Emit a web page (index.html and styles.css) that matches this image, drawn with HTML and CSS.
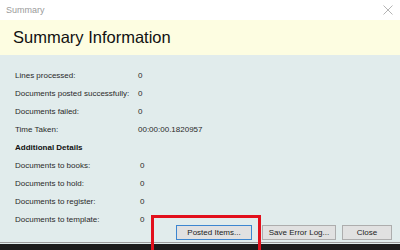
FILE: index.html
```html
<!DOCTYPE html>
<html>
<head>
    <title>Summary</title>
    <link rel="stylesheet" href="styles.css">
</head>
<body>
    <div class="dialog">
        <div class="titlebar">
            <span class="caption">Summary</span>
            <svg class="close-x" width="10" height="10" viewBox="0 0 10 10">
                <path d="M0.5 0.5 L9.5 9.5 M9.5 0.5 L0.5 9.5" stroke="#b4b4b4" stroke-width="1" fill="none"/>
            </svg>
        </div>

        <div class="header">Summary Information</div>

        <div class="content">
            <div class="rows">
                <div class="label">Lines processed:</div>
                <div class="value">0</div>
                <div class="label">Documents posted successfully:</div>
                <div class="value">0</div>
                <div class="label">Documents failed:</div>
                <div class="value">0</div>
                <div class="label">Time Taken:</div>
                <div class="value">00:00:00.1820957</div>
                <div class="section">Additional Details</div>
                <div class="label">Documents to books:</div>
                <div class="value detail">0</div>
                <div class="label">Documents to hold:</div>
                <div class="value detail">0</div>
                <div class="label">Documents to register:</div>
                <div class="value detail">0</div>
                <div class="label">Documents to template:</div>
                <div class="value detail">0</div>
            </div>

            <div class="buttons">
                <button class="btn default posted">Posted Items...</button>
                <button class="btn save">Save Error Log...</button>
                <button class="btn close">Close</button>
            </div>
        </div>

        <div class="taskbar"></div>

        <div class="highlight"></div>
    </div>
</body>
</html>
```

FILE: styles.css
```css
body {
    margin: 0;
    font-family: "Liberation Sans", Arial, sans-serif;
    background: #1b1b1b;
}
.dialog {
    position: relative;
    width: 400px;
    height: 250px;
    overflow: hidden;
}
.titlebar {
    height: 20px;
    background: #ffffff;
    display: flex;
    align-items: center;
    justify-content: space-between;
    padding: 0 7px 0 6px;
}
.caption {
    font-size: 9px;
    color: #9a9a9a;
}
.close-x {
    display: block;
}
.header {
    height: 35px;
    line-height: 35px;
    background: #fdfde1;
    padding-left: 13px;
    font-size: 16.5px;
    color: #111;
}
.content {
    background: #e1ecec;
    padding: 11px 8px 2px 15px;
    border-bottom: 1px solid #9c9c9c;
}
.rows {
    display: grid;
    grid-template-columns: 123px 1fr;
    grid-auto-rows: 18px;
    align-items: center;
    font-size: 8px;
    color: #2a2a2a;
}
.section {
    grid-column: 1 / 3;
    font-weight: bold;
    color: #111;
}
.value.detail {
    padding-left: 2px;
}
.buttons {
    display: flex;
    justify-content: flex-end;
    margin-top: -3px;
}
.btn {
    height: 15px;
    padding: 0;
    font-family: "Liberation Sans", Arial, sans-serif;
    font-size: 8px;
    color: #222;
    background: #e1e1e1;
    border: 1px solid #adadad;
}
.btn.default {
    border-color: #3c86d0;
}
.posted { width: 76px; }
.save { width: 74px; margin-left: 10px; }
.close { width: 50px; margin-left: 6px; }
.taskbar {
    height: 1px;
    background: #e1ecec;
}
.highlight {
    position: absolute;
    left: 151px;
    top: 215px;
    width: 104px;
    height: 50px;
    border: 3px solid #e2101c;
}
```
